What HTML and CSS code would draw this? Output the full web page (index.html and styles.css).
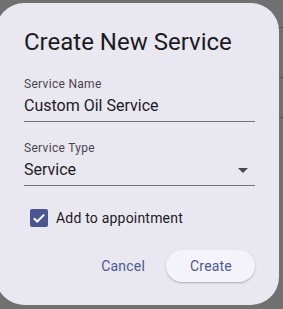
FILE: index.html
```html
<!DOCTYPE html>
<html lang="en">
<head>
    <meta charset="UTF-8">
    <title>Create New Service</title>
    <link rel="stylesheet" href="styles.css">
</head>
<body>
    <div class="fondo">
        <div class="linea l1"></div>
        <div class="linea l2"></div>
        <div class="linea l3"></div>
    </div>

    <div class="dialogo">
        <h1>Create New Service</h1>

        <div class="campo primero">
            <label>Service Name</label>
            <div class="valor">Custom Oil Service</div>
        </div>

        <div class="campo">
            <label>Service Type</label>
            <div class="valor select">
                <span>Service</span>
                <span class="flecha"></span>
            </div>
        </div>

        <div class="check">
            <span class="caja">
                <svg width="18" height="18" viewBox="0 0 18 18">
                    <path d="M3.8 9.2 L7.2 12.5 L14.2 5.6" fill="none" stroke="#fff" stroke-width="2"/>
                </svg>
            </span>
            Add to appointment
        </div>

        <div class="acciones">
            <button class="boton texto">Cancel</button>
            <button class="boton relleno">Create</button>
        </div>
    </div>
</body>
</html>
```

FILE: styles.css
```css
body {
    margin: 0;
    background: #707070;
    font-family: Roboto, "Liberation Sans", sans-serif;
    overflow: hidden;
}
.fondo {
    position: absolute;
    top: 0;
    right: 0;
    width: 8px;
    height: 309px;
}
.linea {
    position: absolute;
    left: 0;
    right: 0;
    height: 1px;
    background: #555;
}
.l1 { top: 27px; }
.l2 { top: 77px; }
.l3 { top: 117px; }
.dialogo {
    position: relative;
    margin: 3px 0 0 -4px;
    width: 283px;
    height: 302px;
    box-sizing: border-box;
    padding: 23px 24px 0 28px;
    background: #e9e7f0;
    border-radius: 28px;
    color: #1c1b1f;
}
h1 {
    margin: 0;
    font-size: 24px;
    line-height: 32px;
    font-weight: 400;
}
.campo {
    margin-top: 18px;
    border-bottom: 1px solid #75727c;
    padding-bottom: 3px;
}
.campo.primero {
    margin-top: 18px;
}
.campo label {
    display: block;
    font-size: 12px;
    line-height: 16px;
    color: #49454f;
    letter-spacing: 0.3px;
}
.valor {
    margin-top: 2px;
    font-size: 16px;
    line-height: 24px;
}
.select {
    display: flex;
    justify-content: space-between;
    align-items: center;
}
.flecha {
    width: 0;
    height: 0;
    border-left: 5px solid transparent;
    border-right: 5px solid transparent;
    border-top: 5px solid #49454f;
    margin-right: 7px;
}
.check {
    display: flex;
    align-items: center;
    gap: 8px;
    margin: 22px 0 0 6px;
    font-size: 14px;
    line-height: 20px;
    color: #1c1b1f;
    letter-spacing: 0.2px;
}
.caja {
    width: 18px;
    height: 18px;
    background: #4a5592;
    border-radius: 2px;
    display: flex;
}
.acciones {
    display: flex;
    justify-content: flex-end;
    align-items: center;
    gap: 9px;
    margin-top: 22px;
}
.boton {
    font-family: inherit;
    font-size: 14px;
    font-weight: 400;
    letter-spacing: 0.2px;
    color: #4d5a93;
    border: none;
    height: 32px;
    padding: 0 12px;
    border-radius: 16px;
    background: transparent;
}
.relleno {
    padding: 0 24px;
    width: 89px;
    background: #f4f3fa;
    box-shadow: 0 1px 2px rgba(0, 0, 0, 0.25);
}
```
